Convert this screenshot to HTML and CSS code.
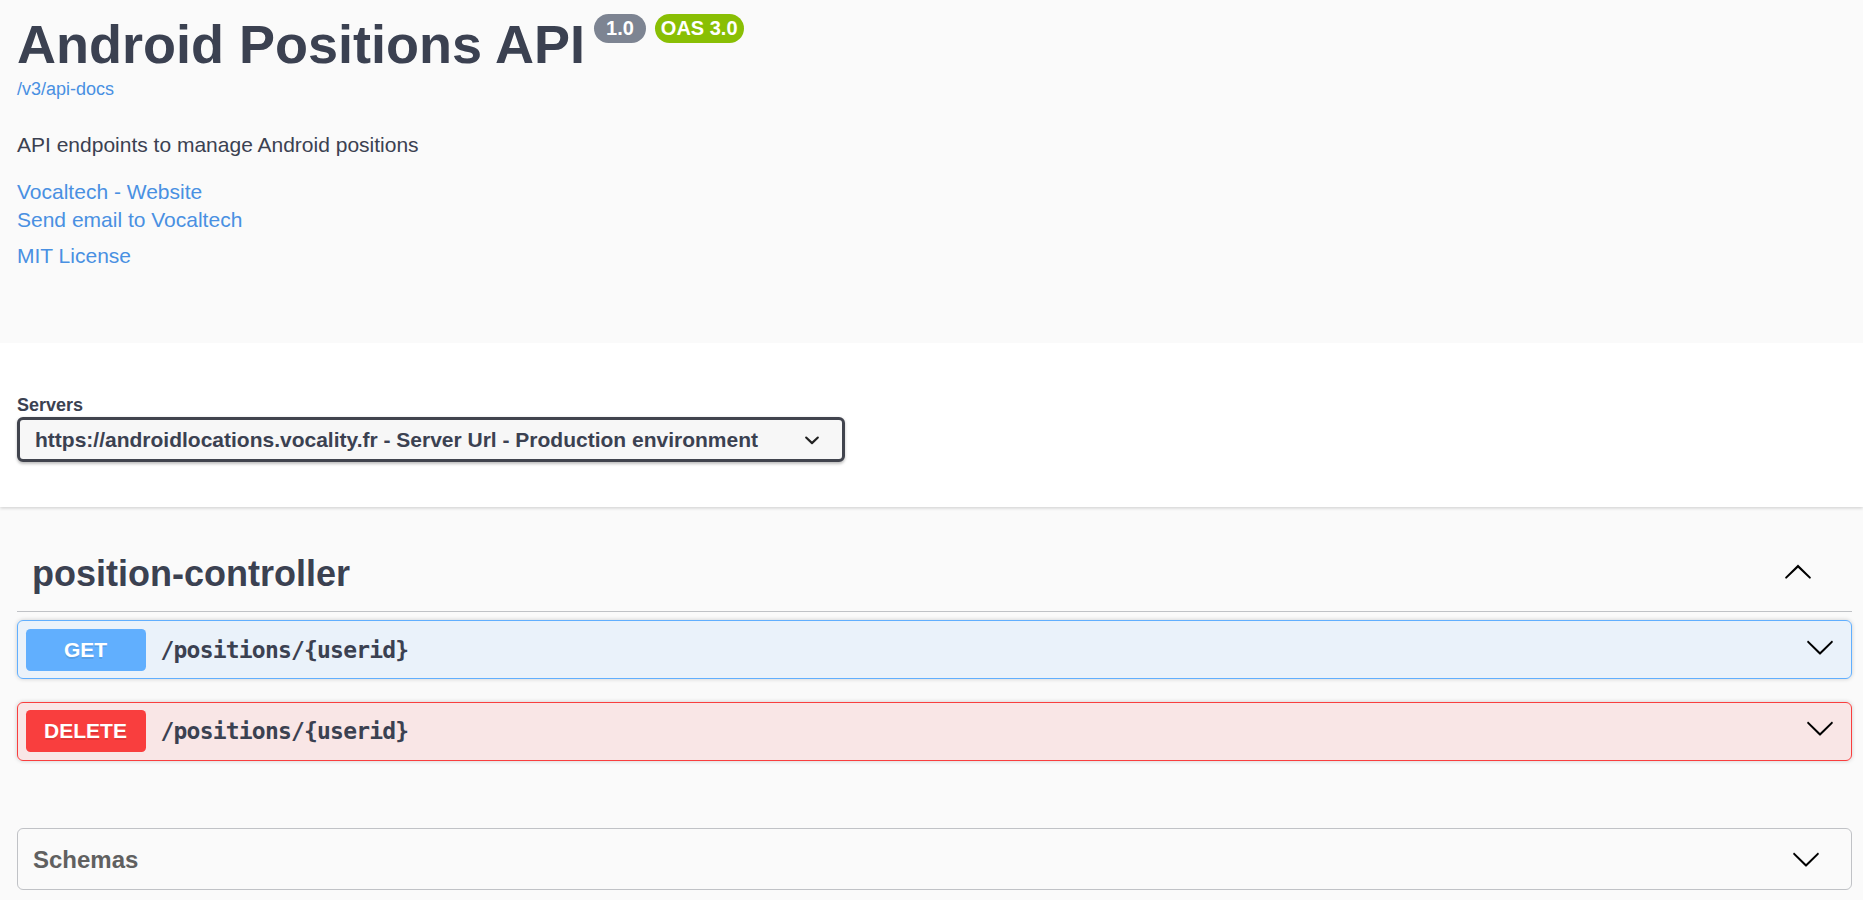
FILE: index.html
```html
<!DOCTYPE html>
<html lang="en">
<head>
<meta charset="utf-8">
<title>Android Positions API</title>
<link rel="stylesheet" href="styles.css">
</head>
<body>
  <div class="info">
    <div class="title-row">
      <h2 class="title">Android Positions API</h2>
      <span class="badge badge-version">1.0</span>
      <span class="badge badge-oas">OAS 3.0</span>
    </div>
    <a class="base-url" href="#">/v3/api-docs</a>
    <p class="desc">API endpoints to manage Android positions</p>
    <div class="contact">
      <a class="link" href="#">Vocaltech - Website</a>
      <a class="link" href="#">Send email to Vocaltech</a>
    </div>
    <div class="license">
      <a class="link" href="#">MIT License</a>
    </div>
  </div>

  <section class="schemes">
    <div class="servers-title">Servers</div>
    <div class="server-select">
      <span class="server-text">https://androidlocations.vocality.fr - Server Url - Production environment</span>
      <svg class="select-arrow" width="30" height="30" viewBox="0 0 20 20"><path d="M13.418 7.859a.695.695 0 01.978 0 .68.68 0 010 .969l-3.908 3.83a.697.697 0 01-.979 0l-3.908-3.83a.68.68 0 010-.969.695.695 0 01.978 0L10 11l3.418-3.141z"/></svg>
    </div>
  </section>

  <main class="content">
    <div class="tag-header">
      <h3 class="tag-name">position-controller</h3>
      <svg class="tag-arrow" width="30" height="30" viewBox="0 0 20 20"><path d="M17.418 14.908c.272.268.709.268.979 0s.271-.701 0-.969l-7.908-7.83c-.27-.268-.707-.268-.979 0l-7.908 7.83c-.27.268-.27.701 0 .969.271.268.709.268.979 0L10 7.767l7.418 7.141z"/></svg>
    </div>

    <div class="op op-get">
      <div class="op-summary">
        <span class="method method-get">GET</span>
        <span class="op-path">/positions/{userid}</span>
        <svg class="op-arrow" width="30" height="30" viewBox="0 0 20 20"><path d="M17.418 6.109c.272-.268.709-.268.979 0s.271.701 0 .969l-7.908 7.83c-.27.268-.707.268-.979 0l-7.908-7.83c-.27-.268-.27-.701 0-.969.271-.268.709-.268.979 0L10 13.250l7.418-7.141z"/></svg>
      </div>
    </div>

    <div class="op op-delete">
      <div class="op-summary">
        <span class="method method-delete">DELETE</span>
        <span class="op-path">/positions/{userid}</span>
        <svg class="op-arrow" width="30" height="30" viewBox="0 0 20 20"><path d="M17.418 6.109c.272-.268.709-.268.979 0s.271.701 0 .969l-7.908 7.83c-.27.268-.707.268-.979 0l-7.908-7.830c-.27-.268-.27-.701 0-.969.271-.268.709-.268.979 0L10 13.25l7.418-7.141z"/></svg>
      </div>
    </div>

    <section class="models">
      <h4 class="models-title">
        <span>Schemas</span>
        <svg class="models-arrow" width="30" height="30" viewBox="0 0 20 20"><path d="M17.418 6.109c.272-.268.709-.268.979 0s.271.701 0 .969l-7.908 7.83c-.27.268-.707.268-.979 0l-7.908-7.83c-.27-.268-.27-.701 0-.969.271-.268.709-.268.979 0L10 13.25l7.418-7.141z"/></svg>
      </h4>
    </section>
  </main>
</body>
</html>
```

FILE: styles.css
```css
html, body {
  margin: 0;
  padding: 0;
}

body {
  background: #fafafa;
  font-family: "Liberation Sans", Arial, sans-serif;
  color: #3b4151;
}

/* ---------- info ---------- */
.info {
  height: 343px;
  box-sizing: border-box;
  padding: 13px 11px 0 17px;
}

.title-row {
  display: flex;
  align-items: flex-start;
}

.title {
  margin: 0;
  font-size: 54px;
  line-height: 62px;
  font-weight: 700;
  color: #3b4151;
}

.badge {
  margin-top: 1px;
  display: inline-block;
  font-size: 20px;
  line-height: 23px;
  font-weight: 700;
  color: #fff;
  border-radius: 86px;
  padding: 3px 6px;
  white-space: nowrap;
}

.badge-version {
  margin-left: 9px;
  background: #7d8492;
  padding: 3px 12px;
}

.badge-oas {
  margin-left: 9px;
  background: #89bf04;
}

.base-url {
  display: block;
  margin-top: 4px;
  font-size: 18px;
  line-height: 21px;
  color: #4990e2;
  text-decoration: none;
}

.desc {
  margin: 31px 0 0;
  font-size: 21px;
  line-height: 28px;
  color: #3b4151;
}

.contact {
  margin-top: 19px;
  display: flex;
  flex-direction: column;
  align-items: flex-start;
}

.license {
  margin-top: 8px;
}

.link {
  font-size: 21px;
  line-height: 28px;
  color: #4990e2;
  text-decoration: none;
}

/* ---------- servers ---------- */
.schemes {
  background: #fff;
  box-shadow: 0 1.5px 3px 0 rgba(0, 0, 0, 0.15);
  padding: 52px 11px 45px 17px;
}

.servers-title {
  font-size: 18px;
  line-height: 21px;
  font-weight: 700;
  color: #3b4151;
}

.server-select {
  margin-top: 1px;
  width: 828px;
  height: 45px;
  box-sizing: border-box;
  border: 3px solid #41444e;
  border-radius: 6px;
  background: #f7f7f7;
  box-shadow: 0 1.5px 3px 0 rgba(0, 0, 0, 0.25);
  padding: 0 15px;
  display: flex;
  align-items: center;
  font-size: 21px;
  font-weight: 700;
  color: #3b4151;
}

.server-text {
  white-space: nowrap;
}

.select-arrow {
  margin-left: auto;
  fill: #222;
  flex: none;
}

/* ---------- operations ---------- */
.content {
  margin-top: 30px;
  padding: 0 11px 0 17px;
}

.tag-header {
  display: flex;
  align-items: center;
  padding: 15px 30px 15px 15px;
  border-bottom: 1px solid rgba(59, 65, 81, 0.3);
  margin-bottom: 8px;
}

.tag-name {
  flex: 1;
  margin: 0;
  font-size: 36px;
  line-height: 44px;
  font-weight: 700;
  color: #3b4151;
}

.tag-arrow {
  flex: none;
  margin: 0 9px 6px 0;
  fill: #000;
}

.op {
  border: 1px solid;
  border-radius: 6px;
  margin-bottom: 22.5px;
  box-shadow: 0 0 4.5px rgba(0, 0, 0, 0.19);
}

.op-get {
  background: rgba(97, 175, 254, 0.1);
  border-color: #61affe;
}

.op-delete {
  background: rgba(249, 62, 62, 0.1);
  border-color: #f93e3e;
}

.op-summary {
  display: flex;
  align-items: center;
  padding: 7.5px;
}

.method {
  flex: none;
  width: 120px;
  height: 42px;
  line-height: 42px;
  border-radius: 4.5px;
  text-align: center;
  font-size: 21px;
  font-weight: 700;
  color: #fff;
  text-shadow: 0 1.5px 0 rgba(0, 0, 0, 0.1);
}

.method-get {
  background: #61affe;
}

.method-delete {
  background: #f93e3e;
}

.op-path {
  padding: 0 15px;
  font-family: "DejaVu Sans Mono", "Liberation Mono", monospace;
  font-size: 23px;
  letter-spacing: -0.8px;
  font-weight: 700;
  color: #3b4151;
}

.op-arrow {
  flex: none;
  margin: 0 9px 6px auto;
  fill: #000;
}

/* ---------- models ---------- */
.models {
  margin-top: 67.5px;
  border: 1px solid rgba(59, 65, 81, 0.3);
  border-radius: 6px;
}

.models-title {
  margin: 0;
  display: flex;
  align-items: center;
  justify-content: space-between;
  padding: 15px 30px 15px 15px;
  font-size: 24px;
  line-height: 29px;
  font-weight: 700;
  color: #606060;
}

.models-arrow {
  flex: none;
  fill: #000;
}
```
